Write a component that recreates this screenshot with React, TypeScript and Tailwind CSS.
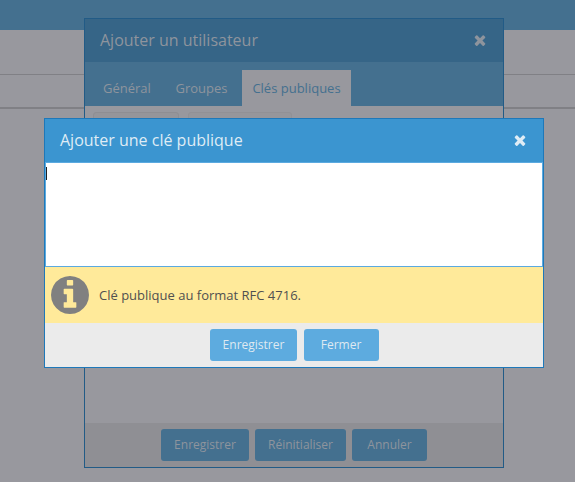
import React from 'react';

function CloseIcon({ className }: { className: string }) {
  return (
    <svg viewBox="0 0 1792 1792" className={className} fill="currentColor">
      <path d="M1490 1322q0 40-28 68l-136 136q-28 28-68 28t-68-28l-294-294-294 294q-28 28-68 28t-68-28l-136-136q-28-28-28-68t28-68l294-294-294-294q-28-28-28-68t28-68l136-136q28-28 68-28t68 28l294 294 294-294q28-28 68-28t68 28l136 136q28 28 28 68t-28 68l-294 294 294 294q28 28 28 68z" />
    </svg>
  );
}

function InfoIcon({ className }: { className: string }) {
  return (
    <svg viewBox="128 128 1536 1536" className={className} fill="currentColor">
      <path d="M1152 1376v-160q0-14-9-23t-23-9h-96v-512q0-14-9-23t-23-9h-320q-14 0-23 9t-9 23v160q0 14 9 23t23 9h96v320h-96q-14 0-23 9t-9 23v160q0 14 9 23t23 9h448q14 0 23-9t9-23zm-128-896v-160q0-14-9-23t-23-9h-192q-14 0-23 9t-9 23v160q0 14 9 23t23 9h192q14 0 23-9t9-23zm640 416q0 209-103 385.5t-279.5 279.5-385.5 103-385.5-103-279.5-279.5-103-385.5 103-385.5 279.5-279.5 385.5-103 385.5 103 279.5 279.5 103 385.5z" />
    </svg>
  );
}

function Backdrop() {
  return (
    <div className="flex h-full flex-col">
      <div className="h-[30px] bg-[#44708f]" />
      <div className="h-[45px] border-b border-[#808085]" />
      <div className="h-[34px] border-b-2 border-[#808085]" />
    </div>
  );
}

function UserDialog() {
  return (
    <section className="absolute top-[18px] left-[84px] flex h-[450px] w-[420px] flex-col border border-[#225b86] bg-[#98989e] text-[#8e949d]">
      <header className="flex h-[43px] shrink-0 items-center justify-between bg-[#366587] px-[15px]">
        <h2 className="pb-[2px] text-[16px] leading-[22px]">Ajouter un utilisateur</h2>
        <CloseIcon className="mb-px size-4" />
      </header>
      <nav className="flex h-[44px] shrink-0 items-end bg-[#44708f] pl-2 text-[13px] leading-[36px]">
        <button className="h-9 w-[73px] pl-[10px] text-left">Général</button>
        <button className="h-9 w-[76px] pl-[9.5px] text-left">Groupes</button>
        <button className="h-9 w-[109px] bg-[#98989e] pl-[10.4px] text-left text-[#44708f]">Clés publiques</button>
      </nav>
      <div className="flex grow gap-[9px] pt-[6px] pl-2">
        <div className="h-8 w-[86px] rounded-[3px] border border-[#8e8e93] bg-[#95959a]" />
        <div className="h-8 w-[104px] rounded-[3px] border border-[#919196] bg-[#96969b]" />
      </div>
      <footer className="flex h-[44px] shrink-0 justify-center gap-[6px] bg-[#8f8f94] pt-[6px] text-[12px]">
        <button className="h-8 w-[88px] rounded-[3px] bg-[#44708f]">Enregistrer</button>
        <button className="h-8 w-[91px] rounded-[3px] bg-[#44708f]">Réinitialiser</button>
        <button className="h-8 w-[75px] rounded-[3px] bg-[#44708f]">Annuler</button>
      </footer>
    </section>
  );
}

function KeyDialog() {
  return (
    <section className="absolute top-[118px] left-[44px] flex h-[250px] w-[500px] flex-col border border-[#1e78b9] bg-[#ebebeb]">
      <header className="flex h-[43px] shrink-0 items-center justify-between bg-[#3b95d0] px-[15px] text-[#dfecf5]">
        <h2 className="pb-[2px] text-[16px] leading-[22px]">Ajouter une clé publique</h2>
        <CloseIcon className="mb-px size-4" />
      </header>
      <div className="h-[105px] shrink-0 border border-[#5baae0] bg-white pt-1">
        <div className="h-[13px] w-px bg-[#202020]" />
      </div>
      <div className="flex h-[56px] shrink-0 items-center gap-[10px] bg-[#ffea9a] pl-[6px]">
        <InfoIcon className="size-[38px] text-[#808080]" />
        <p className="text-[13px] leading-[18px] text-[#505050]">Clé publique au format RFC 4716.</p>
      </div>
      <footer className="flex h-[44px] shrink-0 justify-center gap-[7px] pt-[6px] text-[12px] text-[#dfe9f1]">
        <button className="h-8 w-[87px] rounded-[3px] bg-[#5dabdf] pl-px">Enregistrer</button>
        <button className="h-8 w-[75px] rounded-[3px] bg-[#5dabdf]">Fermer</button>
      </footer>
    </section>
  );
}

export default function App() {
  return (
    <main className="relative h-[482px] w-[575px] overflow-hidden bg-[#98989e] font-['Open_Sans','Noto_Sans',sans-serif]">
      <Backdrop />
      <UserDialog />
      <KeyDialog />
    </main>
  );
}
